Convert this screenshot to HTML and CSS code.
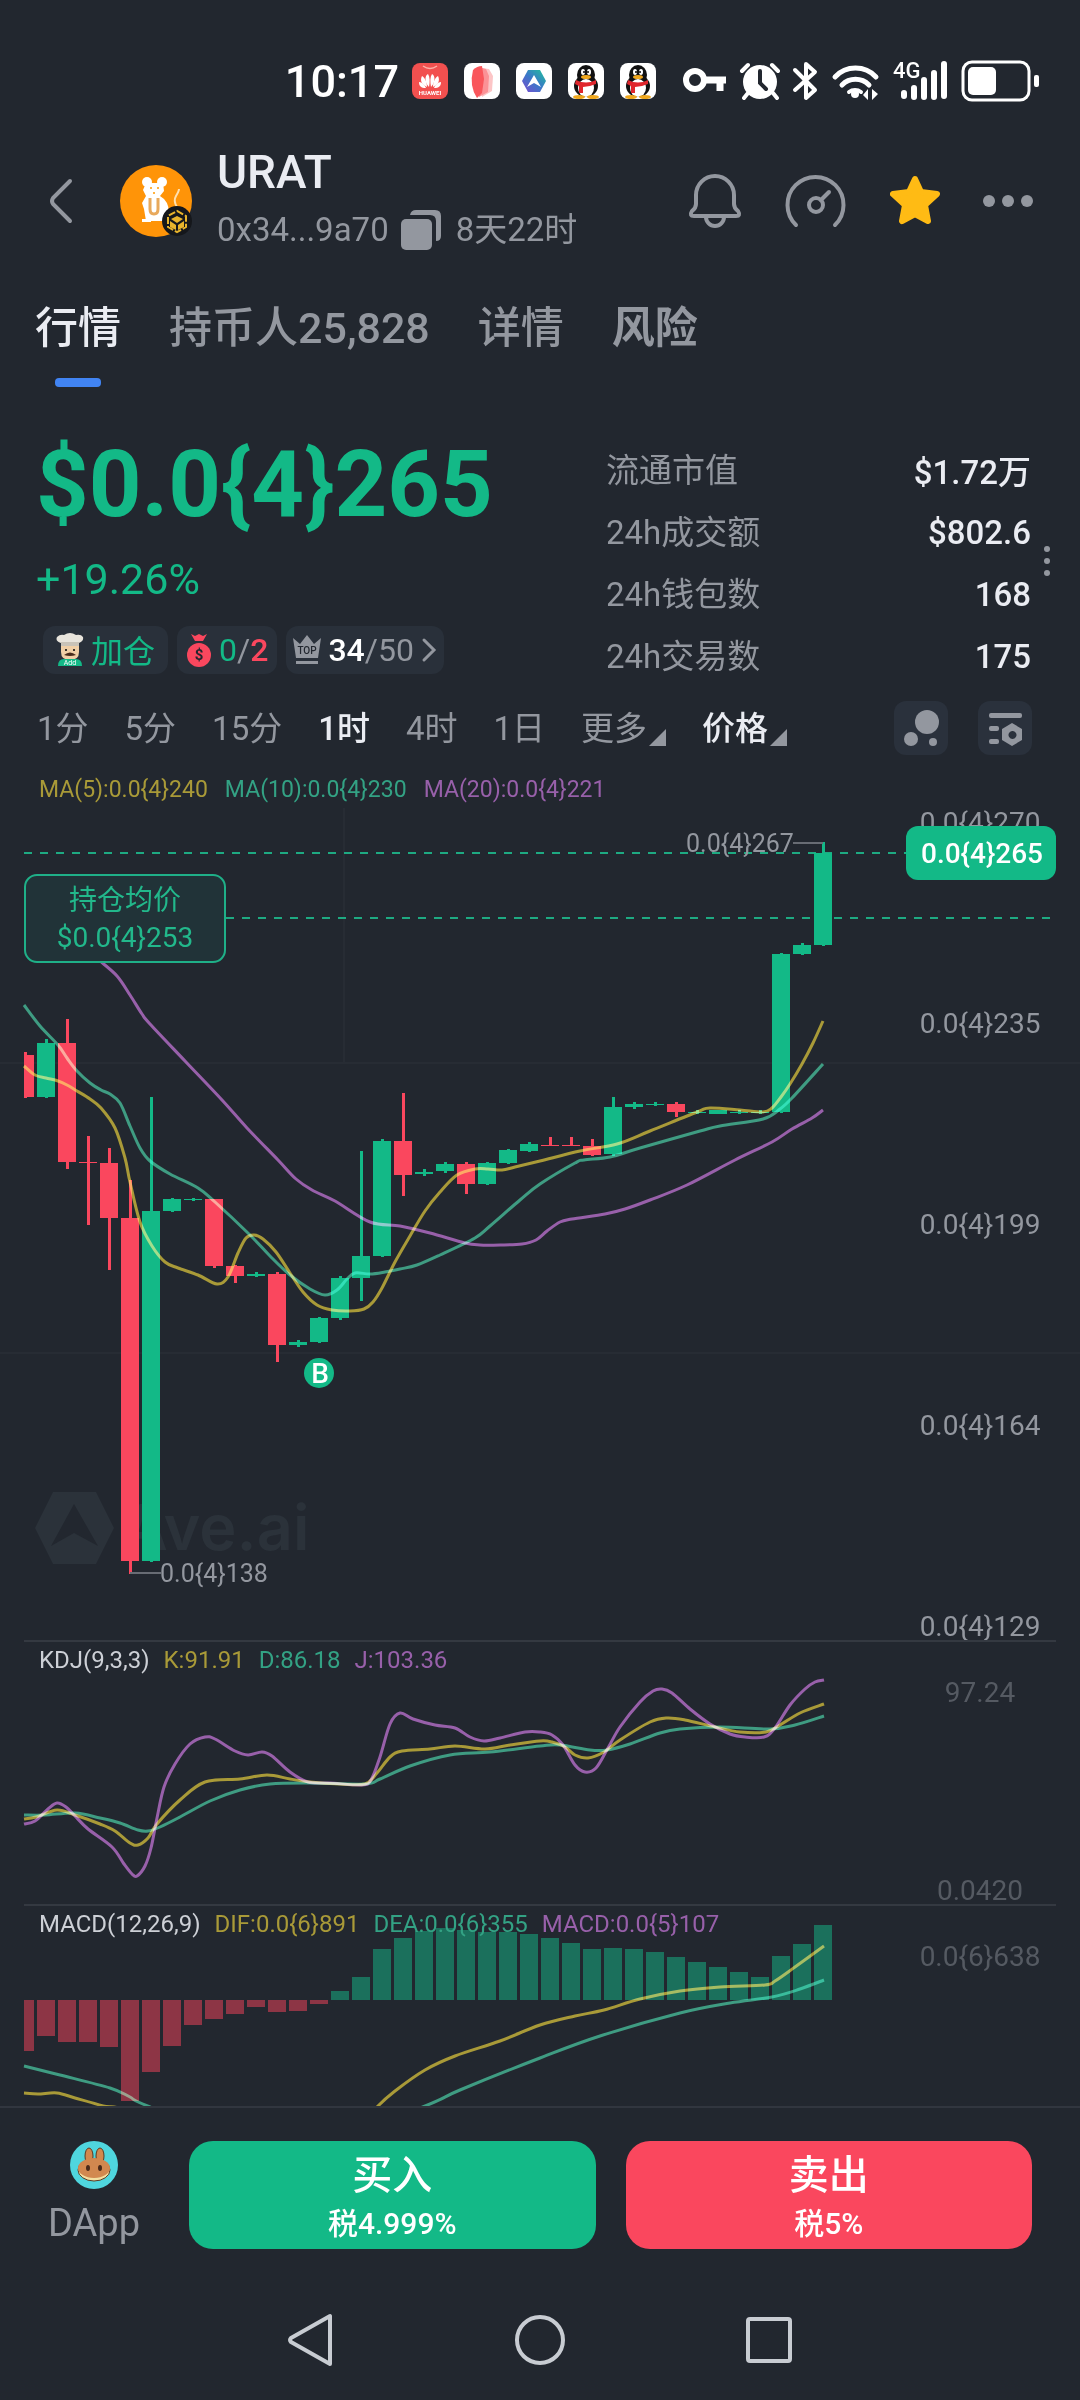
FILE: index.html
```html
<!DOCTYPE html>
<html lang="zh-CN">
  <head>
    <meta charset="UTF-8" />
    <meta name="viewport" content="width=device-width, initial-scale=1.0" />
    <title>URAT 行情</title>
    <link rel="stylesheet" href="styles.css">
  </head>
  <body>
    <div class="status">
      <span class="time">10:17</span>
      <svg class="app" viewBox="0 0 36 36">
        <rect width="36" height="36" rx="8" fill="#f2504f" />
        <path d="M11 3q7 5 14 0" fill="none" stroke="#ffb0a8" stroke-width="1.5" />
        <g fill="#fff">
          <path d="M17 24C12 19 13 12 16 11c2 3 2 8 1 13zM19 24c5-5 4-12 1-13-2 3-2 8-1 13z" />
          <path d="M15 24c-6-3-7-7-5-11 3 2 5 6 5 11zM21 24c6-3 7-7 5-11-3 2-5 6-5 11z" />
          <path d="M14 25c-5 0-7-2-7-6 3 0 6 3 7 6zM22 25c5 0 7-2 7-6-3 0-6 3-7 6z" />
        </g>
        <text x="18" y="32" font-size="6" font-weight="700" fill="#fff" text-anchor="middle">HUAWEI</text>
      </svg>
      <svg class="app" viewBox="0 0 36 36">
        <rect width="36" height="36" rx="8" fill="#fff" />
        <path d="M17 5l8 1 4 7-1 15-10 6z" fill="#fcc5c6" />
        <path d="M14 4l8 2 3 7-1 16-9 5z" fill="#fb9296" />
        <path d="M9 7q4-4 9-4l2 13-2 14-5 5q-8-12-4-28z" fill="#f9565b" />
      </svg>
      <svg class="app" viewBox="0 0 36 36">
        <defs>
          <linearGradient id="ave" x1="0" y1="1" x2="1" y2="0">
            <stop offset="0" stop-color="#7a4bd0" />
            <stop offset="0.5" stop-color="#3a78c8" />
            <stop offset="1" stop-color="#1fc49a" />
          </linearGradient>
        </defs>
        <rect width="36" height="36" rx="8" fill="#fff" />
        <path d="M12 7h12l6 11-6 11H12L6 18z" fill="url(#ave)" />
        <path d="M18 12l7 12-7-4-7 4z" fill="#fff" />
      </svg>
      <svg class="app" viewBox="0 0 36 36">
        <g id="penguin">
          <rect width="36" height="36" rx="8" fill="#fff" />
          <ellipse cx="18" cy="23" rx="12" ry="11" fill="#111" />
          <ellipse cx="18" cy="12" rx="9" ry="10" fill="#111" />
          <ellipse cx="18" cy="25" rx="8" ry="9" fill="#fff" />
          <ellipse cx="11" cy="34" rx="6" ry="2" fill="#f0a81e" />
          <ellipse cx="25" cy="34" rx="6" ry="2" fill="#f0a81e" />
          <ellipse cx="15" cy="9" rx="2" ry="3" fill="#fff" />
          <ellipse cx="21" cy="9" rx="2" ry="3" fill="#fff" />
          <circle cx="16" cy="9" r="1" /><circle cx="20" cy="9" r="1" />
          <ellipse cx="18" cy="14" rx="5" ry="2" fill="#f0a81e" />
          <path d="M8 17q10 5 20 0v4q-7 3-13 3v6h-4v-7l-4-2z" fill="#e0262c" />
        </g>
      </svg>
      <svg class="app" viewBox="0 0 36 36"><use href="#penguin" /></svg>
      <svg class="sys" viewBox="678 60 366 42">
        <g fill="none" stroke="#fff">
          <circle cx="695" cy="80" r="9" stroke-width="6" />
          <path d="M704 80h22M720 80v11" stroke-width="7" />
          <path d="M795 70l20 20-9 8V64l9 8-20 18" stroke-width="4" stroke-linejoin="round" stroke-linecap="round" />
          <path d="M835 77a28 28 0 0 1 41 0M842 85a19 19 0 0 1 27 0" stroke-width="5" stroke-linecap="round" />
          <path d="M849 92a10 10 0 0 1 12 0" stroke-width="4" stroke-linecap="round" />
          <path d="M742 71l6-6M778 71l-6-6M748 93l-4 5M773 93l4 5" stroke-width="4" stroke-linecap="round" />
          <path d="M904 93v3M914 97V88M924 97V80M934 97V73M944 96V64" stroke-width="6" stroke-linecap="round" />
          <rect x="963" y="62" width="66" height="38" rx="9" stroke-width="3" />
        </g>
        <circle cx="760" cy="82" r="17" fill="#fff" />
        <path d="M760 71v12l6 6" fill="none" stroke="#22272f" stroke-width="4" stroke-linecap="round" />
        <circle cx="855" cy="94" r="4" fill="#fff" />
        <path d="M863 95l5-6v11zM872 89v11l6-6z" fill="#fff" />
        <text x="893" y="78" font-size="22" font-weight="500" fill="#fff">4G</text>
        <rect x="968" y="67" width="28" height="28" rx="5" fill="#fff" />
        <rect x="1034" y="75" width="5" height="12" rx="2" fill="#fff" />
      </svg>
    </div>

    <header class="header">
      <button class="icon-btn back" aria-label="返回">
        <svg width="26" height="46" viewBox="0 0 26 46"><path d="M22 3L5 20q-2 3 0 6l17 17" fill="none" stroke="#93979f" stroke-width="4" stroke-linecap="round" /></svg>
      </button>
      <svg class="avatar" viewBox="0 0 72 72">
        <circle cx="36" cy="36" r="36" fill="#ff9408" />
        <g fill="#fff">
          <circle cx="27" cy="17" r="5" /><circle cx="42" cy="17" r="5" />
          <path d="M26 18h17l1 8-4 5q9 5 9 17l-2 8H26l-2-12-2-6 4-7-3-6z" />
          <path d="M22 54h9v3h-9z" />
        </g>
        <path d="M57 42q-4-6-1-11t3-7" fill="none" stroke="#ffe0b0" stroke-width="2" />
        <path d="M30 33v11q0 5 4 5t4-5V33" fill="none" stroke="#e8a95c" stroke-width="3" />
        <circle cx="31" cy="23" r="1" fill="#f90" /><circle cx="38" cy="23" r="1" fill="#f90" /><circle cx="34" cy="28" r="1" fill="#f90" />
        <circle cx="57" cy="56" r="15" fill="#15171b" />
        <path d="M57 46l9 5v11l-9 5-9-5V51z" fill="none" stroke="#e8b42c" stroke-width="2" stroke-dasharray="7 2" />
        <path d="M57 51l6 3-6 4-6-4zM50 56l6 4v5l-6-3zM64 56l-6 4v5l6-3z" fill="#e8b42c" />
      </svg>
      <div class="info">
        <h1>URAT</h1>
        <p>
          <span>0x34...9a70</span>
          <button class="icon-btn copy" aria-label="复制">
            <svg width="40" height="40" viewBox="0 0 40 40" fill="#93979f">
              <rect y="9" width="31" height="31" rx="5" />
              <path d="M9 5q1-5 6-5h19q6 0 6 6v20q0 5-5 5V11q0-6-6-6z" />
            </svg>
          </button>
          <span>8天22时</span>
        </p>
      </div>
      <div class="actions">
        <button class="icon-btn" aria-label="提醒">
          <svg width="54" height="56" viewBox="0 0 54 56" fill="none" stroke="#93979f" stroke-width="4">
            <path d="M8 22a19 19 0 0 1 38 0v9q0 4 4 7 3 5-2 5H6q-5 0-2-5 4-3 4-7zM18 44a9 9 0 0 0 18 0" />
          </svg>
        </button>
        <button class="icon-btn" aria-label="测速">
          <svg width="62" height="56" viewBox="0 0 62 56" fill="none" stroke="#93979f" stroke-width="4" stroke-linecap="round">
            <path d="M11 52a28 28 0 1 1 39 0" />
            <circle cx="31" cy="32" r="7" />
            <path d="M36 27l8-8" />
          </svg>
        </button>
        <button class="icon-btn" aria-label="收藏">
          <svg width="50" height="52" viewBox="2 1 50 52">
            <path d="M27 5l6 13 16 2-12 11 3 16-13-7-13 7 3-16L5 20l16-2z" fill="#ffbb14" stroke="#ffbb14" stroke-width="6" stroke-linejoin="round" />
          </svg>
        </button>
        <button class="icon-btn" aria-label="更多">
          <svg width="50" height="12" viewBox="0 0 50 12" fill="#93979f"><circle cx="6" cy="6" r="6" /><circle cx="25" cy="6" r="6" /><circle cx="44" cy="6" r="6" /></svg>
        </button>
      </div>
    </header>

    <nav class="tabs">
      <a href="#" class="on">行情</a>
      <a href="#">持币人25,828</a>
      <a href="#">详情</a>
      <a href="#" class="risk">风险</a>
    </nav>

    <section class="summary">
      <div class="left">
        <div class="price">$0.0{4}265</div>
        <div class="change">+19.26%</div>
        <div class="chips">
          <button class="chip add">
            <svg width="28" height="34" viewBox="0 0 28 34">
              <path d="M5 11h18v8q0 8-9 8t-9-8z" fill="#f0cfa6" />
              <path d="M5 10q-6-2-4-6 3-3 7-2 6-4 12 0 5-1 7 2 1 4-4 6z" fill="#e8e4dc" />
              <path d="M5 9h18v4H5z" fill="#c9c3b8" />
              <circle cx="10" cy="17" r="1" /><circle cx="18" cy="17" r="1" />
              <path d="M8 22q6-5 12 0-6 2-12 0z" fill="#4a2c1c" />
              <path d="M2 33q0-7 6-7h12q6 0 6 7z" fill="#13b987" />
              <text x="14" y="32" font-size="7" fill="#fff" text-anchor="middle">Add</text>
            </svg>
            <span>加仓</span>
          </button>
          <button class="chip bag">
            <svg width="26" height="34" viewBox="0 0 26 34">
              <path d="M5 1l4 2 4-2 4 2 4-2-4 7H9z" fill="#fa475e" />
              <ellipse cx="13" cy="22" rx="12" ry="12" fill="#fa475e" />
              <text x="13" y="27" font-size="15" font-weight="700" fill="#22272f" text-anchor="middle">$</text>
            </svg>
            <span><b class="up">0</b>/<b class="down">2</b></span>
          </button>
          <button class="chip top">
            <svg width="28" height="30" viewBox="0 0 28 30" fill="#93979f">
              <path d="M0 3l7 6 7-9 7 9 7-6-3 20H3zM3 26h22v3H3z" />
              <text x="14" y="19" font-size="10" font-weight="500" fill="#22272f" text-anchor="middle">TOP</text>
            </svg>
            <span><b>34</b>/50</span>
            <svg width="16" height="26" viewBox="0 0 16 26"><path d="M3 3l10 10L3 23" fill="none" stroke="#93979f" stroke-width="3" stroke-linecap="round" /></svg>
          </button>
        </div>
      </div>
      <table class="stats">
        <tr><th>流通市值</th><td>$1.72万</td></tr>
        <tr><th>24h成交额</th><td>$802.6</td></tr>
        <tr><th>24h钱包数</th><td>168</td></tr>
        <tr><th>24h交易数</th><td>175</td></tr>
      </table>
      <svg class="vdots" width="8" height="32" viewBox="0 0 8 32" fill="#93979f"><circle cx="4" cy="4" r="3" /><circle cx="4" cy="16" r="3" /><circle cx="4" cy="28" r="3" /></svg>
    </section>

    <div class="intervals">
      <button>1分</button>
      <button>5分</button>
      <button>15分</button>
      <button class="on">1时</button>
      <button>4时</button>
      <button>1日</button>
      <button class="drop">更多</button>
      <button class="drop price-type">价格</button>
      <div class="tools">
        <button class="tool" aria-label="气泡图">
          <svg viewBox="0 0 54 54" fill="#93979f"><circle cx="33" cy="21" r="12" /><circle cx="17" cy="38" r="7" /><circle cx="39" cy="41" r="4" /></svg>
        </button>
        <button class="tool" aria-label="指标设置">
          <svg viewBox="0 0 54 54" fill="#93979f">
            <rect x="11" y="12" width="33" height="5" rx="2" /><rect x="11" y="25" width="10" height="5" rx="2" /><rect x="11" y="38" width="10" height="5" rx="2" />
            <path d="M34 22l10 6v11l-10 6-10-6V28zM34 30a4 4 0 1 0 1 0z" fill-rule="evenodd" />
          </svg>
        </button>
      </div>
    </div>

    <main class="charts">
      <div class="panel">
        <svg id="kline" viewBox="0 760 1080 880">
          <path class="grid" d="M0 1063H1080M0 1353H1080M344 808V1063" />
          <g class="watermark">
            <path d="M53 1492h43l18 36-18 36H53l-18-36zM74 1504l-23 42 23-13 24 13z" fill-rule="evenodd" />
            <text x="122" y="1550">Ave.ai</text>
          </g>
          <path class="dash" d="M24 853H906M226 918H1052" />
          <g class="axis">
            <text x="980" y="832">0.0{4}270</text>
            <text x="980" y="1033">0.0{4}235</text>
            <text x="980" y="1234">0.0{4}199</text>
            <text x="980" y="1435">0.0{4}164</text>
            <text x="980" y="1636">0.0{4}129</text>
          </g>
          <g class="plot"></g>
          <g class="mark">
            <path d="M793 843H823M130 1573H161" />
            <text x="686" y="852">0.0{4}267</text>
            <text x="160" y="1582">0.0{4}138</text>
          </g>
          <g class="cost">
            <rect x="25" y="875" width="200" height="87" rx="12" />
            <text x="125" y="910">持仓均价</text>
            <text x="125" y="947">$0.0{4}253</text>
          </g>
          <g class="tag">
            <rect x="906" y="826" width="150" height="54" rx="12" />
            <text x="982" y="863">0.0{4}265</text>
            <circle cx="319" cy="1373" r="15" />
            <text x="320" y="1383">B</text>
          </g>
        </svg>
        <div class="legend main-legend">
          <span class="y">MA(5):0.0{4}240</span>
          <span class="g">MA(10):0.0{4}230</span>
          <span class="p">MA(20):0.0{4}221</span>
        </div>
      </div>
      <div class="panel">
        <svg id="kdj" viewBox="0 1640 1080 264">
          <path class="divider" d="M24 1641H1056" />
          <g class="plot"></g>
          <g class="axis dim">
            <text x="980" y="1702">97.24</text>
            <text x="980" y="1900">0.0420</text>
          </g>
        </svg>
        <div class="legend">
          <span>KDJ(9,3,3)</span>
          <span class="y">K:91.91</span>
          <span class="g">D:86.18</span>
          <span class="p">J:103.36</span>
        </div>
      </div>
      <div class="panel">
        <svg id="macd" viewBox="0 1904 1080 202">
          <path class="divider" d="M24 1905H1056" />
          <g class="plot"></g>
          <g class="axis dim"><text x="980" y="1966">0.0{6}638</text></g>
        </svg>
        <div class="legend">
          <span>MACD(12,26,9)</span>
          <span class="y">DIF:0.0{6}891</span>
          <span class="g">DEA:0.0{6}355</span>
          <span class="p">MACD:0.0{5}107</span>
        </div>
      </div>
    </main>

    <footer class="trade">
      <a href="#" class="dapp">
        <svg width="48" height="48" viewBox="0 0 48 48">
          <circle cx="24" cy="24" r="24" fill="#4fd6de" />
          <g fill="#d2884f" stroke="#5b3a22" stroke-width="1">
            <ellipse cx="19" cy="15" rx="4" ry="8" /><ellipse cx="30" cy="15" rx="4" ry="8" />
            <ellipse cx="24" cy="29" rx="16" ry="11" fill="#f3dfa0" />
            <ellipse cx="24" cy="27" rx="16" ry="10" stroke="none" />
          </g>
          <path d="M17 14h4v8h-4zM28 14h4v8h-4z" fill="#d2884f" />
          <ellipse cx="18" cy="27" rx="2" ry="3" fill="#4a2a1a" /><ellipse cx="30" cy="27" rx="2" ry="3" fill="#4a2a1a" />
        </svg>
        <span>DApp</span>
      </a>
      <button class="buy">买入<small>税4.999%</small></button>
      <button class="sell">卖出<small>税5%</small></button>
    </footer>

    <div class="sysnav">
      <button class="icon-btn" aria-label="后退"><svg width="48" height="54" viewBox="0 0 48 54"><path d="M43 3v48L4 29q-2-2 0-4z" /></svg></button>
      <button class="icon-btn" aria-label="主页"><svg width="54" height="54" viewBox="0 0 54 54"><circle cx="27" cy="27" r="23" /></svg></button>
      <button class="icon-btn" aria-label="任务"><svg width="48" height="54" viewBox="0 0 48 54"><rect x="3" y="6" width="42" height="42" rx="2" /></svg></button>
    </div>

    <script>
      var STEP = 21;
      var FIRST = 25;
      var UP = "#13b987";
      var DOWN = "#fa475e";

      // [涨跌, 实体上沿, 实体下沿, 最高, 最低]
      var candles = [
        [0, 1055, 1097, 1052, 1098], [1, 1043, 1097, 1039, 1098], [0, 1043, 1162, 1019, 1169],
        [0, 1162, 1163, 1136, 1225], [0, 1163, 1218, 1148, 1270], [0, 1218, 1561, 1180, 1574],
        [1, 1211, 1561, 1097, 1562], [1, 1199, 1211, 1198, 1212], [1, 1199, 1200, 1198, 1201],
        [0, 1199, 1266, 1199, 1268], [0, 1266, 1276, 1265, 1283], [1, 1274, 1276, 1272, 1277],
        [0, 1274, 1345, 1272, 1362], [1, 1342, 1345, 1340, 1347], [1, 1318, 1342, 1317, 1343],
        [1, 1278, 1318, 1276, 1320], [1, 1256, 1278, 1151, 1301], [1, 1141, 1256, 1139, 1257],
        [0, 1141, 1175, 1093, 1196], [1, 1172, 1174, 1169, 1176], [1, 1164, 1171, 1162, 1173],
        [0, 1164, 1184, 1162, 1194], [1, 1163, 1184, 1162, 1185], [1, 1150, 1163, 1149, 1164],
        [1, 1144, 1151, 1142, 1152], [0, 1145, 1146, 1137, 1146], [0, 1145, 1146, 1137, 1146],
        [0, 1146, 1155, 1139, 1156], [1, 1107, 1154, 1097, 1156], [1, 1104, 1107, 1102, 1109],
        [1, 1104, 1105, 1102, 1106], [0, 1104, 1112, 1102, 1117], [1, 1112, 1113, 1110, 1114],
        [1, 1110, 1114, 1110, 1114], [1, 1112, 1113, 1110, 1114], [1, 1112, 1113, 1110, 1114],
        [1, 954, 1112, 953, 1113], [1, 945, 954, 943, 955], [1, 853, 945, 842, 946]
      ];
      var macd = [
        2051, 2036, 2042, 2042, 2047, 2101, 2072, 2046, 2025, 2019, 2014, 2007, 2012,
        2011, 2004, 1991, 1977, 1949, 1938, 1931, 1928, 1930, 1932, 1932, 1934, 1938,
        1943, 1949, 1948, 1949, 1952, 1957, 1962, 1967, 1972, 1977, 1956, 1944, 1925
      ];
      var MACD_ZERO = 2000;

      var ma5 = "24,1066 35,1075 46,1078 58,1081 67,1085 77,1091 90,1099 101,1108 115,1128 125,1158 130,1182 140,1222 152,1246 165,1262 178,1268 198,1275 217,1284 228,1277 238,1253 246,1238 254,1235 263,1239 276,1252 290,1273 303,1292 317,1305 332,1310 350,1311 364,1309 373,1302 382,1288 395,1262 410,1236 425,1211 440,1192 457,1175 475,1169 488,1169 502,1170 515,1167 540,1161 580,1151 617,1144 650,1131 697,1112 710,1108 740,1110 763,1112 772,1108 781,1097 790,1084 802,1064 813,1043 823,1021";
      var ma10 = "24,1005 40,1026 58,1045 67,1058 77,1071 90,1083 101,1090 110,1094 120,1103 130,1126 140,1148 150,1161 170,1174 198,1188 215,1202 250,1235 270,1256 290,1275 310,1289 325,1295 337,1290 347,1279 355,1273 370,1274 385,1272 400,1269 417,1265 440,1255 475,1238 490,1226 520,1200 540,1184 575,1163 584,1160 610,1157 640,1148 700,1131 720,1126 763,1119 780,1109 792,1098 823,1064";
      var ma20 = "100,961 117,976 130,995 142,1014 150,1024 185,1061 222,1100 247,1128 278,1160 296,1179 312,1190 335,1201 370,1222 400,1226 430,1233 465,1243 480,1245 500,1245 522,1244 536,1240 547,1231 560,1222 572,1219 605,1214 625,1209 650,1200 687,1185 735,1160 772,1142 792,1129 812,1118 823,1110";

      var lineK = "24,1819 36,1817 57,1810 75,1815 100,1824 115,1831 130,1843 138,1845 148,1838 157,1824 180,1800 205,1782 240,1779 267,1775 290,1779 310,1782 340,1784 365,1784 377,1773 390,1757 402,1751 430,1749 455,1746 485,1749 510,1745 540,1741 552,1742 565,1747 575,1755 588,1758 604,1752 620,1740 650,1722 667,1718 685,1720 715,1727 740,1732 766,1732 780,1725 800,1713 824,1704";
      var lineD = "24,1815 45,1815 75,1813 100,1818 120,1823 138,1830 148,1831 160,1827 180,1817 210,1801 240,1790 270,1784 310,1783 365,1784 380,1779 410,1766 450,1755 490,1752 540,1746 560,1745 590,1750 607,1750 630,1744 660,1733 680,1729 720,1727 770,1729 795,1725 824,1716";
      var lineJ = "24,1824 35,1821 48,1809 57,1803 66,1807 75,1816 88,1829 112,1847 124,1864 132,1874 137,1876 145,1866 151,1848 157,1818 164,1787 175,1764 190,1744 205,1737 215,1739 235,1751 248,1755 262,1752 272,1756 290,1772 308,1782 330,1783 362,1785 371,1780 380,1757 390,1724 400,1713 413,1719 435,1725 455,1728 470,1737 484,1741 500,1738 525,1732 540,1732 552,1735 563,1745 575,1765 585,1772 596,1768 608,1748 620,1727 640,1702 653,1691 662,1689 672,1693 690,1709 710,1724 730,1734 745,1737 764,1737 775,1728 790,1705 805,1689 815,1682 824,1680";

      var dif = "24,2093 38,2094 57,2093 75,2098 103,2106 130,2115 200,2180 340,2150 360,2127 377,2107 395,2091 425,2070 455,2056 500,2041 540,2025 575,2016 604,2010 640,1999 680,1991 720,1987 765,1985 775,1981 795,1967 824,1946";
      var dea = "24,2066 60,2075 110,2088 130,2097 150,2107 280,2160 420,2108 460,2090 540,2058 600,2036 680,2013 730,2003 772,1997 800,1989 824,1980";

      function rect(x, y, w, h, color) {
        return '<rect x="' + x + '" y="' + y + '" width="' + w + '" height="' + h + '" fill="' + color + '"/>';
      }

      // 左边缘只画到 x = 24
      function bar(center, y, h, color) {
        var left = Math.max(24, center - 9);
        return rect(left, y, center + 9 - left, h, color);
      }

      function curve(str, cls) {
        var p = str.split(" ").map(function(s) {
          return s.split(",").map(Number);
        });
        var d = "M" + p[0];
        for (var i = 0; i < p.length - 1; i++) {
          var a = p[i - 1] || p[i];
          var b = p[i];
          var c = p[i + 1];
          var e = p[i + 2] || c;
          d += "C" + [
            b[0] + (c[0] - a[0]) / 6, b[1] + (c[1] - a[1]) / 6,
            c[0] - (e[0] - b[0]) / 6, c[1] - (e[1] - b[1]) / 6,
            c[0], c[1]
          ];
        }
        return '<path class="line ' + cls + '" d="' + d + '"/>';
      }

      function draw(id, html) {
        document.querySelector("#" + id + " .plot").innerHTML = html;
      }

      var html = "";
      candles.forEach(function(c, i) {
        var x = FIRST + i * STEP;
        var color = c[0] ? UP : DOWN;
        html += rect(x - 1, c[3], 3, c[4] - c[3], color);
        html += bar(x, c[1], c[2] - c[1], color);
      });
      draw("kline", html + curve(ma5, "y") + curve(ma10, "g") + curve(ma20, "p"));

      draw("kdj", curve(lineD, "g") + curve(lineK, "y") + curve(lineJ, "p"));

      html = "";
      macd.forEach(function(y, i) {
        var x = FIRST + i * STEP;
        if (y > MACD_ZERO) {
          html += bar(x, MACD_ZERO, y - MACD_ZERO, "#8d3545");
        } else {
          html += bar(x, y, MACD_ZERO - y, "#1b705c");
        }
      });
      draw("macd", html + curve(dif, "y") + curve(dea, "g"));
    </script>
  </body>
</html>
```
FILE: styles.css
```css
* {
  margin: 0;
  padding: 0;
  box-sizing: border-box;
}
body {
  min-height: 100vh;
  display: flex;
  flex-direction: column;
  background: #22272f;
  color: #93979f;
  font-family: Roboto, "Noto Sans CJK SC", sans-serif;
  font-size: 33px;
}
a {
  color: inherit;
  text-decoration: none;
}
button {
  border: none;
  background: none;
  color: inherit;
  font: inherit;
  cursor: pointer;
}
svg {
  display: block;
  flex-shrink: 0;
}
.icon-btn {
  display: flex;
}

/* 状态栏 */
.status {
  display: flex;
  justify-content: flex-end;
  align-items: center;
  height: 109px;
  padding: 53px 36px 0 0;
}
.time {
  margin-right: 13px;
  color: #fff;
  font-size: 45px;
  font-weight: 500;
}
.app {
  width: 36px;
  height: 36px;
  margin-right: 16px;
}
.sys {
  width: 366px;
  height: 42px;
  margin-left: 6px;
}

/* 顶部 */
.header {
  display: flex;
  align-items: center;
  height: 184px;
  padding: 0 47px 0 48px;
}
.avatar {
  width: 72px;
  height: 72px;
  margin-left: 46px;
}
.info {
  margin-left: 25px;
  line-height: 58px;
}
.info h1 {
  color: #eaecf2;
  font-size: 46px;
  font-weight: 500;
}
.info p {
  display: flex;
  align-items: center;
}
.copy {
  margin: 0 15px 0 12px;
}
.actions {
  display: flex;
  align-items: center;
  gap: 43px;
  margin-left: auto;
}

/* 标签 */
.tabs {
  display: flex;
  gap: 48px;
  padding-left: 35px;
  font-size: 43px;
  font-weight: 500;
  line-height: 70px;
}
.tabs .on {
  color: #eaecf2;
}
.tabs .on::after {
  content: "";
  display: block;
  width: 46px;
  height: 9px;
  margin: 15px auto 0;
  border-radius: 4px;
  background: #4184f3;
}
.tabs .risk {
  font-weight: 700;
}

/* 价格 */
.summary {
  display: flex;
  justify-content: space-between;
  padding: 48px 29px 0 36px;
}
.price {
  color: #13b987;
  font-size: 92px;
  font-weight: 700;
  line-height: 100px;
}
.change {
  margin-top: 19px;
  color: #13b987;
  font-size: 43px;
  line-height: 50px;
}
.chips {
  display: flex;
  gap: 9px;
  margin: 22px 0 0 7px;
}
.chip {
  display: flex;
  align-items: center;
  gap: 7px;
  height: 48px;
  padding: 0 7px;
  border-radius: 12px;
  background: #29303a;
  font-size: 32px;
}
.chip b {
  color: #fff;
  font-weight: 500;
}
.chip .up {
  color: #13b987;
  font-weight: 400;
}
.chip .down {
  color: #fa475e;
}
.add {
  padding: 0 13px;
  color: #13b987;
}
.add span {
  padding-bottom: 3px;
}
.bag {
  padding: 0 9px;
}
.stats {
  flex: 0 0 425px;
  margin: 4px 12px 0 auto;
  border-collapse: collapse;
}
.stats tr {
  height: 62px;
}
.stats th {
  padding-bottom: 4px;
  font-weight: 400;
  text-align: left;
}
.stats td {
  color: #eaecf2;
  font-weight: 500;
  text-align: right;
}
.vdots {
  align-self: center;
}

/* 周期 */
.intervals {
  display: flex;
  align-items: center;
  gap: 36px;
  margin-top: 14px;
  padding: 0 48px 5px 37px;
}
.intervals > button {
  padding-bottom: 4px;
}
.intervals .on,
.price-type {
  color: #eaecf2;
  font-weight: 500;
}
.drop::after {
  content: "";
  display: inline-block;
  margin-left: 2px;
  border-left: 17px solid transparent;
  border-bottom: 17px solid #93979f;
  vertical-align: -6px;
}
.tools {
  display: flex;
  gap: 30px;
  margin-left: auto;
}
.tool {
  width: 54px;
  height: 54px;
  border-radius: 12px;
  background: #2a313c;
}

/* 图表 */
.panel {
  position: relative;
}
.panel svg {
  width: 100%;
}
#kline,
#kdj {
  overflow: visible;
}
.legend {
  position: absolute;
  top: 5px;
  left: 39px;
  display: flex;
  gap: 14px;
  color: #cdd0d6;
  font-size: 24px;
  line-height: 30px;
}
.main-legend {
  top: 15px;
  gap: 17px;
  font-size: 23px;
}
.legend .y {
  color: #a99a38;
}
.legend .g {
  color: #33a284;
}
.legend .p {
  color: #9860aa;
}
.grid {
  stroke: #272c34;
  stroke-width: 2;
}
.divider {
  stroke: #343941;
  stroke-width: 2;
}
.watermark {
  fill: #2b323a;
}
.watermark text {
  font: 600 63px Inter, sans-serif;
}
.dash {
  stroke: #1eaa82;
  stroke-width: 2;
  stroke-dasharray: 8 8;
}
.line {
  fill: none;
  stroke-width: 3;
  mix-blend-mode: screen;
}
.line.y {
  stroke: #9c880b;
}
.line.g {
  stroke: #218a66;
}
.line.p {
  stroke: #884397;
}
.axis {
  fill: #93979f;
  font-size: 28px;
  text-anchor: middle;
}
.dim {
  fill: #555a62;
}
.mark {
  fill: #93979f;
  font-size: 25px;
}
.mark path {
  stroke: #686c74;
  stroke-width: 2;
}
.cost {
  fill: #22b88b;
  font-size: 28px;
  text-anchor: middle;
}
.cost rect {
  fill: #213338;
  stroke: #1fb088;
  stroke-width: 2;
}
.tag {
  fill: #13b987;
  font-size: 28px;
  font-weight: 500;
  text-anchor: middle;
}
.tag text {
  fill: #fff;
}

/* 买卖 */
.trade {
  display: flex;
  gap: 30px;
  padding: 33px 48px 0 48px;
  border-top: 2px solid #31363f;
}
.dapp {
  display: flex;
  flex-direction: column;
  align-items: center;
  gap: 10px;
  margin-right: 19px;
  font-size: 38px;
  line-height: 48px;
}
.buy,
.sell {
  flex: 1;
  height: 108px;
  padding-top: 10px;
  border-radius: 24px;
  color: #fff;
  font-size: 40px;
  font-weight: 500;
  line-height: 48px;
}
.buy {
  background: #13b987;
}
.sell {
  background: #fa475e;
}
.trade small {
  display: block;
  font-size: 30px;
}

/* 导航键 */
.sysnav {
  flex: 1;
  display: flex;
  justify-content: center;
  align-items: center;
  gap: 178px;
  padding: 50px 0 20px;
}
.sysnav svg {
  fill: none;
  stroke: #c8ccd2;
  stroke-width: 4;
  stroke-linejoin: round;
}
```
